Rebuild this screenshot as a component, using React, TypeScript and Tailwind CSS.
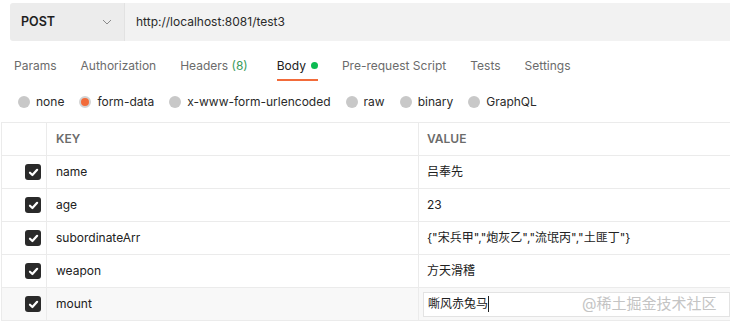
import React from "react";

const font = { fontFamily: 'Inter, "Noto Sans CJK SC", sans-serif' };

function Check() {
  return (
    <div className="w-[16px] h-[16px] rounded-[3px] bg-[#2a2a2a] flex items-center justify-center">
      <svg width="11" height="11" viewBox="0 0 10 10">
        <path d="M1.8 5.2 L4 7.3 L8.3 2.6" fill="none" stroke="#fff" strokeWidth="2" strokeLinecap="round" strokeLinejoin="round" />
      </svg>
    </div>
  );
}

const rows = [
  { k: "name", v: "吕奉先" },
  { k: "age", v: "23" },
  { k: "subordinateArr", v: '{"宋兵甲","炮灰乙","流氓丙","土匪丁"}' },
  { k: "weapon", v: "方天滑稽" },
];

export default function App() {
  const tabs = ["Params", "Authorization", "Headers", "Body", "Pre-request Script", "Tests", "Settings"];
  const radios = ["none", "form-data", "x-www-form-urlencoded", "raw", "binary", "GraphQL"];
  return (
    <div className="w-[730px] h-[321px] bg-white overflow-hidden text-[12px] text-[#212121]" style={font}>
      <div className="pt-[3px] pl-[10px]">
        <div className="h-[38px] flex rounded-l-[3px] overflow-hidden">
          <div className="w-[115px] bg-[#ececec] flex items-center pl-[11px] pr-[12px] justify-between border-r border-[#e2e2e2]">
            <span className="font-semibold text-[12.5px] text-[#1f1f1f]">POST</span>
            <svg width="10" height="6" viewBox="0 0 10 6">
              <path d="M1 1 L5 5 L9 1" fill="none" stroke="#8a8a8a" strokeWidth="1" />
            </svg>
          </div>
          <div className="flex-1 bg-[#f2f2f2] flex items-center pl-[11px] text-[12px] text-[#2a2a2a]">
            http://localhost:8081/test3
          </div>
        </div>
      </div>
      <div className="h-[40px] flex items-end pl-[14px] gap-[24px]">
        {tabs.map((t) => (
          <div
            key={t}
            className={
              "h-[29px] flex items-center border-b-2 " +
              (t === "Body" ? "ml-[5px] border-[#f26b3a] text-[#212121]" : "border-transparent text-[#6b6b6b]")
            }
          >
            {t === "Headers" ? (
              <span>
                Headers <span className="text-[#3a9c5c]">(8)</span>
              </span>
            ) : t === "Body" ? (
              <span className="flex items-center gap-[5px]">
                Body <span className="w-[7px] h-[7px] rounded-full bg-[#0cbb52] inline-block" />
              </span>
            ) : (
              t
            )}
          </div>
        ))}
      </div>
      <div className="h-[41px] flex items-center pl-[18px] gap-[15px]">
        {radios.map((r) => (
          <div key={r} className="flex items-center gap-[6px] text-[#2a2a2a]">
            {r === "form-data" ? (
              <span className="w-[12px] h-[12px] rounded-full bg-[#f26b3a] border-[2px] border-[#d3d3d3] inline-block" />
            ) : (
              <span className="w-[12px] h-[12px] rounded-full bg-[#c8c8c8] inline-block" />
            )}
            <span>{r}</span>
          </div>
        ))}
      </div>
      <div className="border-t border-l border-[#ebebeb] ml-[1px]">
        <div className="h-[33px] flex border-b border-[#ebebeb]">
          <div className="w-[45px] border-r border-[#ebebeb]" />
          <div className="w-[372px] border-r border-[#ebebeb] flex items-center pl-[9px] font-semibold text-[12px] text-[#6b6b6b]">KEY</div>
          <div className="flex-1 flex items-center pl-[8px] font-semibold text-[12px] text-[#6b6b6b]">VALUE</div>
        </div>
        {rows.map((r) => (
          <div key={r.k} className="h-[33px] flex border-b border-[#ebebeb]">
            <div className="w-[45px] border-r border-[#ebebeb] flex items-center pl-[23px]">
              <Check />
            </div>
            <div className="w-[372px] border-r border-[#ebebeb] flex items-center pl-[9px]">{r.k}</div>
            <div className="flex-1 flex items-center pl-[8px]">{r.v}</div>
          </div>
        ))}
        <div className="h-[33px] flex border-b border-[#ebebeb] bg-[#f8f8f8]">
          <div className="w-[45px] border-r border-[#ebebeb] flex items-center pl-[23px]">
            <Check />
          </div>
          <div className="w-[372px] border-r border-[#ebebeb] flex items-center pl-[9px]">mount</div>
          <div className="flex-1 flex items-center pl-[4px]">
            <div className="h-[25px] flex-1 bg-white border border-[#e3e3e3] flex items-center pl-[4px] relative">
              <span>嘶风赤兔马</span>
              <span className="w-px h-[16px] bg-[#212121] inline-block" />
              <span className="absolute left-[158px] text-[15px] text-[#c4c4c4]">@稀土掘金技术社区</span>
            </div>
          </div>
        </div>
      </div>
    </div>
  );
}
